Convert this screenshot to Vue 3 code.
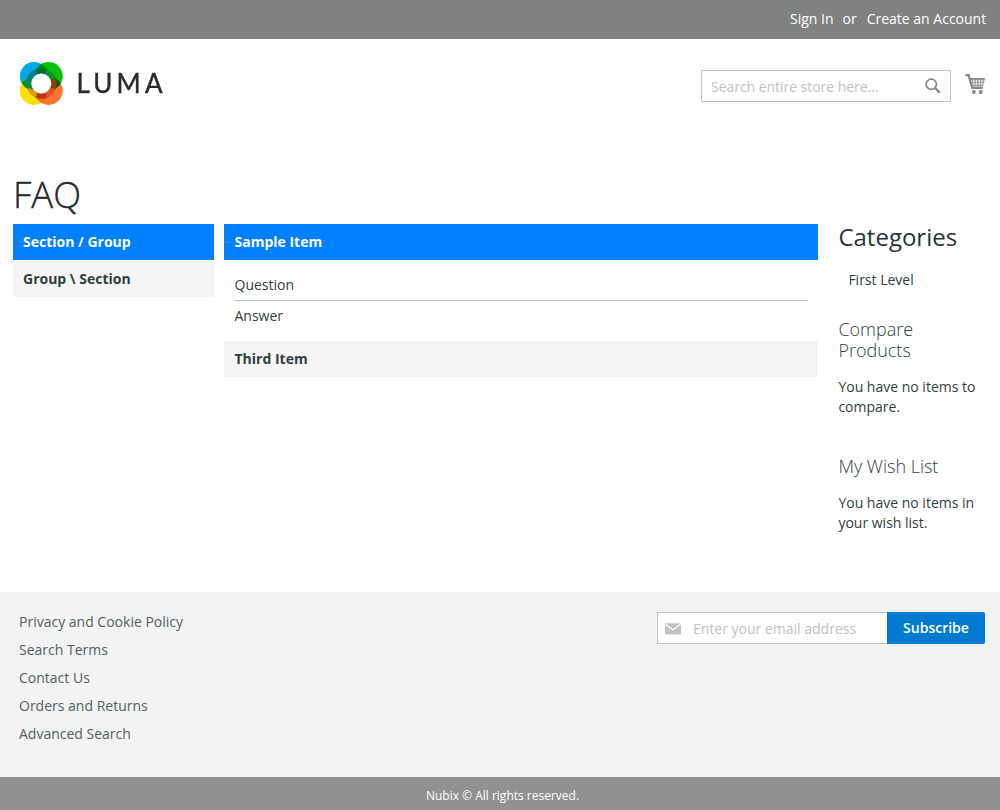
<script setup>
const groups = ['Section / Group', 'Group \\ Section']
const links = ['Privacy and Cookie Policy', 'Search Terms', 'Contact Us', 'Orders and Returns', 'Advanced Search']
// Ring segments, clockwise from the right-hand side
const ring = ['#7c480e', '#e05320', '#b63718', '#d9a000', '#12884a', '#087c91', '#006b32', '#079326']
</script>

<template>
  <div class="page">
    <div class="panel">
      <a>Sign In</a><span class="or">or</span><a>Create an Account</a>
    </div>
    <header class="header">
      <svg class="logo" width="150" height="48" viewBox="0 0 150 48">
        <g class="rings">
          <circle cx="19" cy="18.2" r="14.1" fill="#00a9e8" />
          <circle cx="33.6" cy="18.2" r="14.1" fill="#08c106" />
          <circle cx="19" cy="32.8" r="14.1" fill="#ffe100" />
          <circle cx="33.6" cy="32.8" r="14.1" fill="#ff7332" />
        </g>
        <g fill="none" stroke-width="5.6" transform="rotate(-22.5 26.3 25.5)">
          <circle
            v-for="(c, i) in ring" :key="c" cx="26.3" cy="25.5" r="12.5" :stroke="c"
            pathLength="8" stroke-dasharray="1.02 6.98" :stroke-dashoffset="-i"
          />
        </g>
        <circle cx="26.3" cy="25.5" r="10" fill="#fff" />
        <text class="brand" x="61.5" y="35" textLength="86">LUMA</text>
      </svg>
      <div class="search">
        <span>Search entire store here...</span>
        <svg width="16" height="16" viewBox="0 0 16 16" fill="none" stroke="#848888">
          <circle cx="6.3" cy="6.3" r="5.1" stroke-width="1.7" />
          <path d="M10 10 L14.8 14.6" stroke-width="2.2" />
        </svg>
      </div>
      <svg class="cart" width="21" height="21" viewBox="0 0 21 21">
        <path d="M.4 1.2 H3.6 L7.2 14 H17.8" fill="none" stroke="#848888" stroke-width="2.2" />
        <path d="M4.2 4 H20 L17.8 12.6 H6.2 Z" fill="#848888" />
        <path d="M6 7 H18.6 M6.8 10 H17.8 M8.4 5.4 L9 11.6 M11.4 5.4 V11.6 M14.5 5.4 L14.2 11.6 M17.4 5.4 L16.6 11.6" fill="none" stroke="#fff" stroke-width=".7" />
        <circle cx="8.8" cy="18" r="2" fill="#848888" />
        <circle cx="15.8" cy="18" r="2" fill="#848888" />
      </svg>
    </header>

    <h1>FAQ</h1>
    <main class="columns">
      <nav class="groups">
        <div v-for="(g, i) in groups" :key="g" class="tab" :class="{ active: i === 0 }">{{ g }}</div>
      </nav>
      <section class="items">
        <div class="tab active">Sample Item</div>
        <div class="qa">
          <div class="question">Question</div>
          <div class="answer">Answer</div>
        </div>
        <div class="tab">Third Item</div>
      </section>
      <aside class="side">
        <h2>Categories</h2>
        <a class="level">First Level</a>
        <h3>Compare Products</h3>
        <p>You have no items to compare.</p>
        <h3 class="wish">My Wish List</h3>
        <p>You have no items in your wish list.</p>
      </aside>
    </main>

    <footer class="footer">
      <ul>
        <li v-for="l in links" :key="l">{{ l }}</li>
      </ul>
      <div class="newsletter">
        <div class="email">
          <svg width="16" height="12" viewBox="0 0 16 12">
            <rect y=".3" width="16" height="11.2" rx="1" fill="#c0c3c3" />
            <path d="M.3 1.2 L8 6.8 L15.7 1.2" fill="none" stroke="#fff" stroke-width="1.2" />
          </svg>
          <span>Enter your email address</span>
        </div>
        <button>Subscribe</button>
      </div>
    </footer>
    <div class="copyright">Nubix © All rights reserved.</div>
  </div>
</template>

<style>
body { margin: 0; background: #fff; }
</style>

<style scoped>
.page {
  width: 1000px;
  height: 810px;
  display: flex;
  flex-direction: column;
  overflow: hidden;
  font: 14px/20px "Open Sans", sans-serif;
  color: #2f3f40;
}
.panel {
  box-sizing: border-box;
  height: 39px;
  flex: none;
  padding: 9px 13.8px 0 0;
  display: flex;
  justify-content: flex-end;
  background: #7f8280;
  color: #fff;
}
.or { margin: 0 10px 0 9px; }
.header {
  height: 135px;
  flex: none;
  display: flex;
  align-items: flex-start;
  padding: 0 14px 0 15px;
}
.logo { margin-top: 19px; isolation: isolate; }
.rings circle { mix-blend-mode: multiply; }
.brand { font: 400 26px Lato, sans-serif; fill: #2b2b2b; stroke: #2b2b2b; stroke-width: .4px; }
.search {
  box-sizing: border-box;
  width: 250px;
  height: 32px;
  margin: 31px 14px 0 auto;
  padding: 0 9px;
  border: 1px solid #bfc2c2;
  border-radius: 1px;
  display: flex;
  align-items: center;
  justify-content: space-between;
  color: #bfc3c3;
}
.search span { padding-top: 2px; letter-spacing: -.04px; }
.cart { margin-top: 35px; }
h1 {
  margin: 0 0 0 13px;
  height: 50px;
  font-size: 36.4px;
  line-height: 40px;
  font-weight: 300;
  color: #222b2c;
  -webkit-text-stroke: .4px #222b2c;
}
.columns {
  height: 368px;
  flex: none;
  display: flex;
  padding: 0 15px 0 13px;
}
.groups { width: 201px; display: flex; flex-direction: column; gap: 1px; }
.items { width: 594px; margin: 0 20px 0 10px; }
.tab {
  box-sizing: border-box;
  height: 36px;
  padding: 8px 10px;
  background: #f5f5f5;
  font-weight: 700;
}
.items .tab { padding-left: 10.5px; }
.active { background: #007fff; color: #fff; }
.qa { padding: 15px 10px; }
.question { border-bottom: 1px solid #bfbfbf; padding: 0 0 5px .5px; }
.answer { padding: 5px 0 0 .5px; }
.side { flex: 1; padding-left: .4px; }
h2 { margin: 0; font-size: 24px; line-height: 26px; font-weight: 400; color: #2a3435; }
.level { display: block; margin: 20px 0 29px 10px; }
h3 { width: 110px; margin: 0; font-size: 18px; line-height: 21px; font-weight: 300; }
p { margin: 16px 0 0; }
.wish { margin-top: 39px; }
.footer {
  height: 185px;
  flex: none;
  box-sizing: border-box;
  background: #f3f3f3;
  display: flex;
  justify-content: space-between;
  padding: 20px 15px 0 19px;
}
ul { list-style: none; margin: 0; padding: 0; color: #536061; }
li { margin-bottom: 8px; }
.newsletter { display: flex; height: 32px; }
.email {
  box-sizing: border-box;
  width: 230px;
  height: 32px;
  border: 1px solid #bfc2c2;
  border-right: 0;
  background: #fff;
  display: flex;
  align-items: center;
  gap: 12px;
  padding-left: 7px;
  color: #bfc3c3;
}
.email span { padding-top: 2px; }
.email svg { margin-top: 1px; }
button {
  width: 98px;
  padding: 0;
  border: 0;
  border-radius: 0 2px 2px 0;
  background: #007bcf;
  color: #fff;
  font: 600 14px/20px "Open Sans", sans-serif;
}
.copyright {
  flex: 1;
  padding-top: 9px;
  text-align: center;
  font-size: 12px;
  background: #919191;
  color: #fff;
  padding-left: 5px;
}
</style>
